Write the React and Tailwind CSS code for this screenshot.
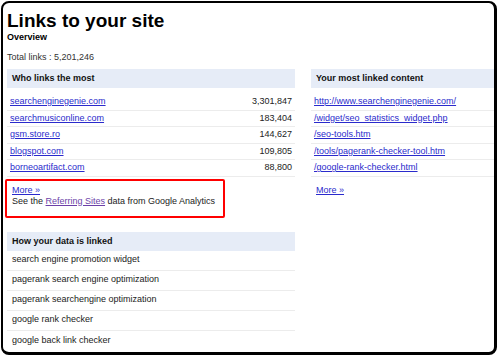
const topLinks = [
  ['searchenginegenie.com', '3,301,847'],
  ['searchmusiconline.com', '183,404'],
  ['gsm.store.ro', '144,627'],
  ['blogspot.com', '109,805'],
  ['borneoartifact.com', '88,800'],
]

const content = [
  'http://www.searchenginegenie.com/',
  '/widget/seo_statistics_widget.php',
  '/seo-tools.htm',
  '/tools/pagerank-checker-tool.htm',
  '/google-rank-checker.html',
]

const anchors = [
  'search engine promotion widget',
  'pagerank search engine optimization',
  'pagerank searchengine optimization',
  'google rank checker',
  'google back link checker',
]

function Header({ children }) {
  return (
    <div className="h-[19px] flex items-center bg-[#e6ecf7] px-[5px] pt-[1px] text-[9px] font-bold text-[#111]">
      {children}
    </div>
  )
}

export default function App() {
  return (
    <div className="w-[500px] h-[357px] bg-white font-['Liberation_Sans',Arial,sans-serif] text-[#222]">
      <div className="ml-[1px] mt-[1px] w-[496px] h-[354px] border-t-2 border-l-2 border-r-[3px] border-b-[3px] border-black rounded-[8px] pt-[7px] pl-[4px] overflow-hidden">
        <h1 className="text-[19px] leading-[21px] font-bold text-black">Links to your site</h1>
        <div className="mt-[1px] text-[9px] leading-[11px] font-bold text-black">Overview</div>
        <div className="mt-[9px] text-[9px] leading-[11px] text-[#333]">Total links : 5,201,246</div>

        <div className="mt-[6px] flex gap-[16px]">
          {/* left column */}
          <div className="w-[288px] shrink-0">
            <Header>Who links the most</Header>
            <div className="mt-[6px]">
              {topLinks.map(([site, n]) => (
                <div key={site} className="h-[16.5px] flex items-center justify-between px-[3px] border-b border-[#ececec] text-[9px]">
                  <a href="#" className="text-[#2a2acc] underline">{site}</a>
                  <span className="text-[#222]">{n}</span>
                </div>
              ))}
            </div>
            <div className="relative mt-[8px] px-[5px] text-[9px] leading-[11px]">
              <a href="#" className="text-[#2a2acc] underline">More »</a>
              <div>
                See the <a href="#" className="text-[#6c3fa8] underline">Referring Sites</a> data from Google Analytics
              </div>
              {/* annotation box */}
              <div className="absolute left-[-2px] top-[-6px] w-[220px] h-[39px] border-2 border-[#ff0000] rounded-[2px]" />
            </div>

            <div className="mt-[25px]">
              <Header>How your data is linked</Header>
              {anchors.map((a, i) => (
                <div
                  key={a}
                  className={
                    i < anchors.length - 1
                      ? 'h-[20px] flex items-center px-[5px] border-b border-[#ececec] text-[9px] text-[#222]'
                      : 'h-[20px] flex items-center px-[5px] text-[9px] text-[#222]'
                  }
                >
                  {a}
                </div>
              ))}
            </div>
          </div>

          {/* right column */}
          <div className="flex-1">
            <Header>Your most linked content</Header>
            <div className="mt-[6px]">
              {content.map(c => (
                <div key={c} className="h-[16.5px] flex items-center px-[3px] border-b border-[#ececec] text-[9px]">
                  <a href="#" className="text-[#2a2acc] underline">{c}</a>
                </div>
              ))}
            </div>
            <div className="mt-[8px] px-[5px] text-[9px] leading-[11px]">
              <a href="#" className="text-[#2a2acc] underline">More »</a>
            </div>
          </div>
        </div>
      </div>
    </div>
  )
}
